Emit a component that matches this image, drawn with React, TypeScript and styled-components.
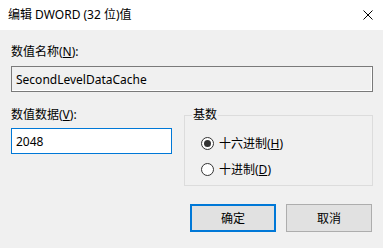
import React from "react";
import styled, { createGlobalStyle } from "styled-components";

const Global = createGlobalStyle`
  html, body { margin: 0; padding: 0; background: #f0f0f0; }
  body { font-family: "Noto Sans", "Noto Sans CJK SC", sans-serif; font-size: 12px; color: #000; }
  * { box-sizing: border-box; }
`;

const Window = styled.div`
  width: 383px;
  height: 248px;
  background: #f0f0f0;
  display: flex;
  flex-direction: column;
  overflow: hidden;
`;

const TitleBar = styled.div`
  height: 30px;
  background: #fff;
  display: flex;
  align-items: center;
  justify-content: space-between;
  padding: 0 10px 0 8px;
`;

const Title = styled.span`
  font-size: 12px;
  line-height: 16px;
`;

const Body = styled.div`
  display: flex;
  flex-direction: column;
  padding: 14px 10px 0 11px;
`;

const Label = styled.div`
  font-size: 12px;
  line-height: 16px;
  height: 16px;
`;

const U = styled.span`
  text-decoration: underline;
`;

const Field = styled.div<{ $readOnly?: boolean }>`
  height: 26px;
  display: flex;
  align-items: center;
  padding-left: 4px;
  font-size: 12px;
  border: 1px solid ${(p) => (p.$readOnly ? "#7a7a7a" : "#0078d7")};
  background: ${(p) => (p.$readOnly ? "#f0f0f0" : "#fff")};
  box-shadow: ${(p) => (p.$readOnly ? "inset -1px -1px 0 #fff" : "none")};
`;

const NameField = styled(Field)`
  margin-top: 6px;
`;

const Row = styled.div`
  display: flex;
  gap: 12px;
  margin-top: 15px;
`;

const Column = styled.div`
  width: 161px;
  display: flex;
  flex-direction: column;
`;

const DataField = styled(Field)`
  margin-top: 5px;
`;

const Group = styled.fieldset`
  flex: 1;
  margin: 0;
  padding: 0;
  min-width: 0;
  height: 79px;
  border: 1px solid #dcdcdc;
  display: flex;
  flex-direction: column;
`;

const Legend = styled.legend`
  margin-left: 7px;
  padding: 0 1px;
  font-size: 12px;
  line-height: 16px;
`;

const RadioList = styled.div`
  display: flex;
  flex-direction: column;
  margin-top: 7px;
  padding-left: 16px;
`;

const RadioRow = styled.div`
  display: flex;
  align-items: center;
  gap: 5px;
  height: 26px;
`;

const Circle = styled.span<{ $checked?: boolean }>`
  width: 13px;
  height: 13px;
  border-radius: 50%;
  border: 1px solid #333;
  background: #fff;
  display: flex;
  align-items: center;
  justify-content: center;
  &::after {
    content: "";
    width: 7px;
    height: 7px;
    border-radius: 50%;
    background: ${(p) => (p.$checked ? "#333" : "transparent")};
  }
`;

const Buttons = styled.div`
  display: flex;
  justify-content: flex-end;
  gap: 10px;
  margin-top: 18px;
  padding-right: 1px;
`;

const Button = styled.button<{ $primary?: boolean }>`
  width: 86px;
  height: 28px;
  margin: 0;
  padding: 0;
  font-family: inherit;
  font-size: 12px;
  color: #000;
  background: #e1e1e1;
  border: ${(p) => (p.$primary ? "2px solid #0078d7" : "1px solid #adadad")};
`;

const CloseIcon = () => (
  <svg width="10" height="10" viewBox="0 0 10 10">
    <path d="M0.5 0.5 L9.5 9.5 M9.5 0.5 L0.5 9.5" stroke="#000" strokeWidth="1" />
  </svg>
);

export default function App() {
  return (
    <Window>
      <Global />
      <TitleBar>
        <Title>编辑 DWORD (32 位)值</Title>
        <CloseIcon />
      </TitleBar>
      <Body>
        <Label>
          数值名称(<U>N</U>):
        </Label>
        <NameField $readOnly>SecondLevelDataCache</NameField>
        <Row>
          <Column>
            <Label>
              数值数据(<U>V</U>):
            </Label>
            <DataField>2048</DataField>
          </Column>
          <Group>
            <Legend>基数</Legend>
            <RadioList>
              <RadioRow>
                <Circle $checked />
                <span>
                  十六进制(<U>H</U>)
                </span>
              </RadioRow>
              <RadioRow>
                <Circle />
                <span>
                  十进制(<U>D</U>)
                </span>
              </RadioRow>
            </RadioList>
          </Group>
        </Row>
        <Buttons>
          <Button $primary>确定</Button>
          <Button>取消</Button>
        </Buttons>
      </Body>
    </Window>
  );
}
